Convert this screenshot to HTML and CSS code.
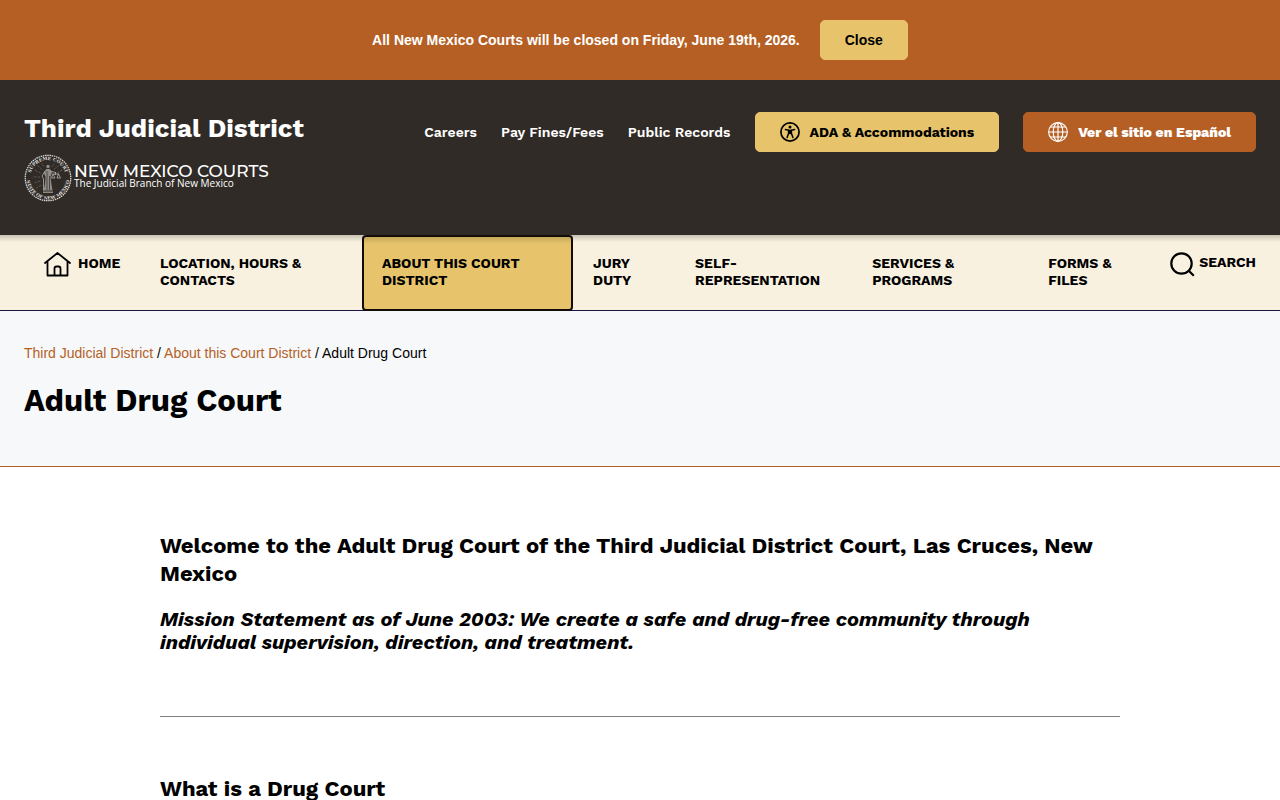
FILE: index.html
```html
<!DOCTYPE html>
<html lang="en">
	<head>
		<meta charset="utf-8">
		<title>Adult Drug Court | Third Judicial District</title>
		<meta name="viewport" content="width=device-width, initial-scale=1">
		<link rel="stylesheet" href="styles.css">
	</head>
	<body>
		<div class="alert">
			<p class="alert-text">All New Mexico Courts will be closed on Friday, June 19th, 2026.</p>
			<button class="btn btn-close" type="button">Close</button>
		</div>

		<header class="header">
			<div class="brand">
				<a class="brand-title" href="#">Third Judicial District</a>
				<a class="logo" href="#">
					<svg class="seal" viewBox="0 0 96 96" aria-hidden="true">
						<defs>
							<path id="seal-top" d="M12 48a36 36 0 0 1 72 0"/>
							<path id="seal-bottom" d="M5 48a43 43 0 0 0 86 0"/>
						</defs>
						<circle cx="48" cy="48" r="45.500" fill="none" stroke="#ddd" stroke-width="2.500" stroke-dasharray="3 1.500"/>
						<text class="seal-text"><textPath href="#seal-top" startOffset="50%" text-anchor="middle">SUPREME COURT</textPath></text>
						<text class="seal-text"><textPath href="#seal-bottom" startOffset="50%" text-anchor="middle">STATE OF NEW MEXICO</textPath></text>
						<g stroke="#77736e" stroke-width="1.200" stroke-dasharray="5 2">
							<path d="M40 25L35 18M36 31L26 22M33 38L20 31M32 46H17M33 54L19 58M34 62L23 69M56 25L61 18M60 31L70 22M66 38L77 32"/>
						</g>
						<g fill="#8f8b86">
							<circle cx="48" cy="25" r="3.500"/>
							<path d="M44 30h8l4 7-3 9 2 15 2 12H39l3-13 1-14-3-7z"/>
							<path d="M38 75h20v3H38z"/>
						</g>
						<g fill="none" stroke="#b5b1ac" stroke-width="1.600">
							<path d="M52 34l11 3M57 40h13M63 36v6M58 40l-3 8h7zM69 40l-3 8h7zM42 34l-6 10 3 6M39 50v23"/>
						</g>
						<path d="M46 34v38M51 44v28" stroke="#4b4641" stroke-width="2"/>
					</svg>
					<span class="logo-text">
						<span class="logo-name">NEW MEXICO COURTS</span>
						<span class="logo-tag">The Judicial Branch of New Mexico</span>
					</span>
				</a>
			</div>
			<div class="header-links">
				<a class="header-link" href="#">Careers</a>
				<a class="header-link" href="#">Pay Fines/Fees</a>
				<a class="header-link" href="#">Public Records</a>
				<a class="btn btn-gold" href="#">
					<svg class="btn-icon" viewBox="0 0 20 20" aria-hidden="true">
						<circle cx="10" cy="10" r="9.100" fill="none" stroke="#000" stroke-width="1.700"/>
						<circle cx="10" cy="5.100" r="1.500"/>
						<path d="M5.400 7.500l3.200.8v3L7.100 15.500M14.600 7.500l-3.200.8v3l1.500 4.200" fill="none" stroke="#000" stroke-width="1.500" stroke-linecap="round" stroke-linejoin="round"/>
						<path d="M8 7.700h4v4.500H8z"/>
					</svg>
					ADA &amp; Accommodations
				</a>
				<a class="btn btn-rust" href="#">
					<svg class="btn-icon" viewBox="0 0 20 20" fill="none" stroke="#fff" stroke-width="1.200" aria-hidden="true">
						<circle cx="10" cy="10" r="9.300"/>
						<ellipse cx="10" cy="10" rx="4.800" ry="9.300"/>
						<path d="M10 .7v18.600M.7 10h18.600M2.400 5h15.200M2.400 15h15.200"/>
					</svg>
					Ver el sitio en Español
				</a>
			</div>
		</header>

		<nav class="nav" aria-label="Main">
			<ul class="menu">
				<li><a class="menu-link menu-home" href="#">
					<svg class="home-icon" viewBox="0 0 27 25" fill="none" stroke="#000" stroke-width="1.800" stroke-linejoin="round" stroke-linecap="round" aria-hidden="true">
						<path d="M1 11L13.500 1 26 11M3.500 9.500V23.500h20V9.500M10.500 23.500V16.500q0-2 2-2h2q2 0 2 2v7"/>
					</svg>
					HOME
				</a></li>
				<li><a class="menu-link" href="#">LOCATION, HOURS &amp; CONTACTS</a></li>
				<li><a class="menu-link active" href="#">ABOUT THIS COURT DISTRICT</a></li>
				<li><a class="menu-link" href="#">JURY DUTY</a></li>
				<li><a class="menu-link" href="#">SELF-REPRESENTATION</a></li>
				<li><a class="menu-link" href="#">SERVICES &amp; PROGRAMS</a></li>
				<li><a class="menu-link" href="#">FORMS &amp; FILES</a></li>
			</ul>
			<button class="search" type="button">
				<svg class="search-icon" viewBox="0 0 25 25" fill="none" stroke="#000" stroke-width="2.200" aria-hidden="true">
					<circle cx="11.500" cy="11.500" r="10.200"/>
					<path d="M18.500 18.500l5.300 5.300"/>
				</svg>
				SEARCH
			</button>
		</nav>

		<div class="page-head">
			<div class="breadcrumb">
				<a href="#">Third Judicial District</a> / <a href="#">About this Court District</a> / <span>Adult Drug Court</span>
			</div>
			<h1>Adult Drug Court</h1>
		</div>

		<main class="content">
			<h2>Welcome to the Adult Drug Court of the Third Judicial District Court, Las Cruces, New Mexico</h2>
			<h3>Mission Statement as of June 2003: We create a safe and drug-free community through individual supervision, direction, and treatment.</h3>
			<hr>
			<h2>What is a Drug Court</h2>
		</main>
	</body>
</html>
```

FILE: styles.css
```css
* {
	box-sizing: border-box;
}

body {
	margin: 0;
	background: #fff;
	color: #000;
	font-family: "Liberation Sans", Arial, sans-serif;
	font-size: 14px;
	line-height: 20px;
}

a {
	text-decoration: none;
}

/* closure notice */
.alert {
	display: flex;
	align-items: center;
	justify-content: center;
	gap: 20px;
	padding: 20px 24px;
	background: #b55f25;
}

.alert-text {
	margin: 0;
	color: #fff;
	font-weight: bold;
}

.btn {
	display: flex;
	align-items: center;
	gap: 10px;
	height: 40px;
	padding: 0 24px;
	border: 1px solid transparent;
	border-radius: 5px;
	font-family: "Work Sans", Inter, sans-serif;
	font-size: 14px;
	font-weight: 700;
	white-space: nowrap;
}

.btn-close {
	background-color: #e7c46b;
	border-color: #e7c46b;
	color: #000;
	font-family: "Liberation Sans", Arial, sans-serif;
}

.btn-gold {
	background-color: #e7c46b;
	border-color: #e7c46b;
	color: #000;
}

.btn-rust {
	background-color: #b55f25;
	border-color: #b55f25;
	color: #fff;
	font-weight: 800;
}

.btn-icon {
	width: 20px;
	height: 20px;
}

/* header */
.header {
	display: flex;
	align-items: flex-start;
	justify-content: space-between;
	padding: 32px 24px 33px;
	background: #312b27;
}

.brand-title {
	display: block;
	color: #fff;
	font-family: "Work Sans", Inter, sans-serif;
	font-size: 26px;
	font-weight: 700;
	line-height: 32px;
}

.logo {
	display: flex;
	align-items: center;
	gap: 2px;
	margin-top: 10px;
	color: #fff;
}

.seal {
	width: 48px;
	height: 48px;
}

.seal-text {
	fill: #ddd;
	font-family: "DejaVu Serif", serif;
	font-size: 9px;
	font-weight: bold;
}

.logo-name,
.logo-tag {
	display: block;
}

.logo-name {
	font-family: Montserrat, Inter, sans-serif;
	font-size: 17px;
	font-weight: 500;
	line-height: 14px;
}

.logo-tag {
	padding-bottom: 3px;
	font-family: "Open Sans", sans-serif;
	font-size: 10px;
	font-weight: 500;
	line-height: 11px;
}

.header-links {
	display: flex;
	align-items: center;
	gap: 24px;
}

.header-link {
	color: #fff;
	font-family: "Work Sans", Inter, sans-serif;
	font-size: 14px;
	font-weight: 600;
}

/* main menu */
.nav {
	display: flex;
	justify-content: space-between;
	gap: 20px;
	padding: 0 24px;
	border-bottom: 1px solid #1d1440;
	background: #f9f1e0 linear-gradient(rgba(0, 0, 0, 0.2), transparent 7px);
}

.menu {
	display: grid;
	flex: 1;
	grid-template-columns: 116fr 222fr 211fr 102fr 177fr 176fr 122fr;
	margin: 0;
	padding: 0;
	list-style: none;
}

.menu li {
	display: flex;
	min-width: 0;
}

.menu-link,
.search {
	color: #000;
	font-family: "Work Sans", Inter, sans-serif;
	font-size: 14px;
	font-weight: 700;
	line-height: 17px;
}

.menu-link {
	flex: 1;
	padding: 20px 20px 21px;
}

.menu-home {
	display: flex;
	align-items: flex-start;
	gap: 7px;
	padding-top: 17px;
	padding-right: 0;
	line-height: 23px;
}

.home-icon {
	width: 27px;
	height: 25px;
}

/* the open section covers the menu's bottom line */
.active {
	margin-bottom: -1px;
	padding: 18px 18px 19px;
	border: 2px solid #110c08;
	border-radius: 4px;
	background: #e7c46b linear-gradient(rgba(0, 0, 0, 0.15), transparent 7px);
}

.search {
	display: flex;
	align-items: flex-start;
	align-self: flex-start;
	gap: 4px;
	margin-top: 17px;
	padding: 0;
	border: 0;
	background: none;
	line-height: 20px;
}

.search-icon {
	width: 25px;
	height: 25px;
}

/* page title */
.page-head {
	padding: 32px 24px 44px;
	border-bottom: 1px solid #b55f25;
	background: #f6f8fa;
}

.breadcrumb a {
	color: #b55f25;
}

h1,
h2,
h3 {
	margin: 0;
	font-family: "Work Sans", Inter, sans-serif;
	font-weight: 700;
}

h1 {
	margin-top: 17px;
	font-size: 31px;
	line-height: 42px;
}

/* article */
.content {
	max-width: 1008px;
	margin: 0 auto;
	padding: 65px 24px;
}

h2 {
	font-size: 22px;
	line-height: 28px;
}

h3 {
	margin-top: 20px;
	font-size: 20px;
	font-style: italic;
	line-height: 23px;
}

hr {
	height: 1px;
	margin: 62px 0 58px;
	border: 0;
	background: #808080;
}
```
